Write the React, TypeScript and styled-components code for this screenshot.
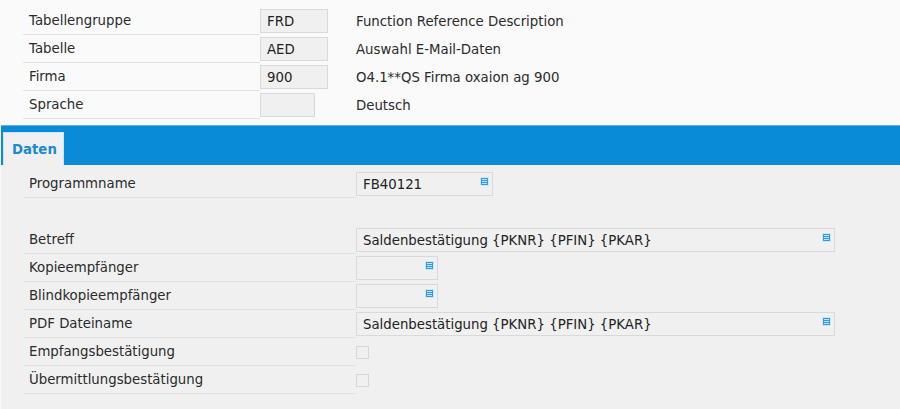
import { createGlobalStyle } from 'styled-components';
import styled from 'styled-components';

const GlobalStyle = createGlobalStyle`
  html, body {
    margin: 0;
    padding: 0;
    background: #fafafa;
  }
  body {
    font-family: "DejaVu Sans", Verdana, sans-serif;
    font-size: 13.3px;
    color: #2b2b2b;
  }
`

const Page = styled.div`
  width: 900px;
  height: 409px;
  overflow: hidden;
  display: flex;
  flex-direction: column;
`

const Header = styled.div`
  padding: 7px 0 6px 23px;
  background: #fafafa;
`

const Row = styled.div`
  display: flex;
  align-items: center;
  height: 28px;
`

const Label = styled.div<{ $width: number }>`
  width: ${p => p.$width}px;
  height: 100%;
  box-sizing: border-box;
  padding-left: 6px;
  display: flex;
  align-items: center;
  border-bottom: 1px solid #e2e2e2;
  flex-shrink: 0;
`

const FieldCell = styled.div`
  width: 96px;
  flex-shrink: 0;
`

const Field = styled.div<{ $width: number }>`
  position: relative;
  width: ${p => p.$width}px;
  height: 24px;
  box-sizing: border-box;
  border: 1px solid #d9d9d9;
  background: #f0f0f0;
  padding-left: 6px;
  display: flex;
  align-items: center;
  color: #222;
  flex-shrink: 0;
`

const Description = styled.div`
  white-space: nowrap;
`

const TabBar = styled.div`
  margin-left: 1px;
  height: 39px;
  background: #0a8bd8;
  border-top: 1px solid #58b2ea;
  display: flex;
  align-items: flex-end;
  padding-left: 2px;
`

const Tab = styled.div`
  width: 61px;
  height: 33px;
  box-sizing: border-box;
  background: #f0f0f0;
  border: 1px solid #cfe3f2;
  border-bottom: none;
  display: flex;
  align-items: center;
  padding-left: 8px;
  font-weight: bold;
  color: #1b8ad3;
`

const Content = styled.div`
  flex: 1;
  margin-left: 1px;
  background: #f0f0f0;
  padding: 5px 0 0 22px;
`

const Spacer = styled.div`
  height: 28px;
`

const Checkbox = styled.div`
  width: 13px;
  height: 13px;
  box-sizing: border-box;
  border: 1px solid #d6d6d6;
  background: #f0f0f0;
`

const ListIcon = styled.svg`
  position: absolute;
  top: 4px;
  right: 3px;
`

function PickIcon() {
  return (
    <ListIcon width="9" height="9" viewBox="0 0 9 9">
      <rect x="0" y="0" width="9" height="9" fill="#cfe6f7" />
      <rect x="1" y="1" width="7" height="7" fill="#2f9be3" />
      <rect x="2" y="2" width="5" height="1" fill="#bfe2fa" />
      <rect x="2" y="4" width="5" height="1" fill="#bfe2fa" />
      <rect x="2" y="6" width="5" height="1" fill="#bfe2fa" />
    </ListIcon>
  );
}

const headerRows = [
  { label: 'Tabellengruppe', value: 'FRD', width: 68, desc: 'Function Reference Description' },
  { label: 'Tabelle', value: 'AED', width: 68, desc: 'Auswahl E-Mail-Daten' },
  { label: 'Firma', value: '900', width: 68, desc: 'O4.1**QS Firma oxaion ag 900' },
  { label: 'Sprache', value: '', width: 55, desc: 'Deutsch' },
];

type DataRow = { label: string; value?: string; width?: number; pick?: boolean; check?: boolean };

const dataRows: DataRow[] = [
  { label: 'Betreff', value: 'Saldenbestätigung {PKNR} {PFIN} {PKAR}', width: 479, pick: true },
  { label: 'Kopieempfänger', value: '', width: 82, pick: true },
  { label: 'Blindkopieempfänger', value: '', width: 82, pick: true },
  { label: 'PDF Dateiname', value: 'Saldenbestätigung {PKNR} {PFIN} {PKAR}', width: 479, pick: true },
  { label: 'Empfangsbestätigung', check: true },
  { label: 'Übermittlungsbestätigung', check: true },
];

export default function App() {
  return (
    <Page>
      <GlobalStyle />
      <Header>
        {headerRows.map(r => (
          <Row key={r.label}>
            <Label $width={237}>{r.label}</Label>
            <FieldCell>
              <Field $width={r.width}>{r.value}</Field>
            </FieldCell>
            <Description>{r.desc}</Description>
          </Row>
        ))}
      </Header>
      <TabBar>
        <Tab>Daten</Tab>
      </TabBar>
      <Content>
        <Row>
          <Label $width={333}>Programmname</Label>
          <Field $width={137}>
            FB40121
            <PickIcon />
          </Field>
        </Row>
        <Spacer />
        {dataRows.map(r => (
          <Row key={r.label}>
            <Label $width={333}>{r.label}</Label>
            {r.check ? (
              <Checkbox />
            ) : (
              <Field $width={r.width || 0}>
                {r.value}
                {r.pick && <PickIcon />}
              </Field>
            )}
          </Row>
        ))}
      </Content>
    </Page>
  );
}
